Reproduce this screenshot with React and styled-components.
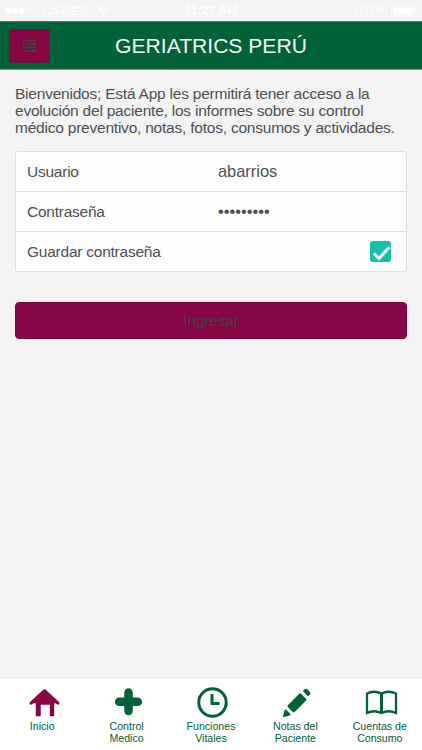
import React from "react";
import styled, { createGlobalStyle } from "styled-components";

const GlobalStyle = createGlobalStyle`
  * {
    box-sizing: border-box;
  }
  body {
    margin: 0;
    background-color: #f3f3f3;
    font-family: "Liberation Sans", Arial, sans-serif;
    color: #4d5054;
  }
`;

const StyledScreen = styled.div`
  display: flex;
  flex-direction: column;
  width: 100%;
  height: 100vh;
  overflow: hidden;
`;

const StyledStatusBar = styled.div`
  display: grid;
  grid-template-columns: 1fr auto 1fr;
  align-items: center;
  height: 21px;
  padding: 0 5px;
  color: #fdfdfd;
  font-size: 12px;
`;

const StyledStatusGroup = styled.div`
  display: flex;
  align-items: center;
  justify-content: ${(props) => props.$align || "flex-start"};
  column-gap: 4px;
`;

const StyledCarrier = styled.span`
  margin-right: 6px;
  font-size: 11px;
  letter-spacing: -0.8px;
`;

const StyledTime = styled.span`
  font-weight: 700;
  font-size: 12.3px;
`;

const StyledHeader = styled.header`
  display: grid;
  grid-template-columns: 41px 1fr 41px;
  align-items: center;
  height: 49px;
  padding: 0 9px;
  background-color: #006236;
  border-top: 1px solid #3f8567;
  border-bottom: 1px solid #6d9d86;
`;

const StyledMenuButton = styled.button`
  display: flex;
  align-items: center;
  justify-content: center;
  width: 41px;
  height: 34px;
  padding: 0;
  border: 1px solid #5d1c3c;
  border-radius: 3px;
  background-color: #870645;
`;

const StyledTitle = styled.h1`
  margin: 0;
  font-size: 21.1px;
  font-weight: 400;
  line-height: 24px;
  text-align: center;
  white-space: nowrap;
  color: #f8fffb;
`;

const StyledContent = styled.main`
  flex: 1;
  padding: 15px 15px 0;
`;

const StyledWelcome = styled.p`
  margin: 0 0 15px;
  font-size: 15.5px;
  letter-spacing: -0.22px;
  line-height: 17px;
  white-space: nowrap;
`;

const StyledForm = styled.div`
  height: 121px;
  border: 1px solid #dfdfe0;
  border-radius: 3px;
  background-color: #fdfdfd;
`;

const StyledRow = styled.div`
  display: grid;
  grid-template-columns: 191px 1fr auto;
  align-items: center;
  height: 40px;
  padding: 0 15px 0 11px;
  border-bottom: 1px solid #dfdfe0;
  &:last-child {
    height: 39px;
    border-bottom: 0;
  }
`;

const StyledLabel = styled.span`
  font-size: 15.5px;
  letter-spacing: -0.24px;
`;

const StyledValue = styled.span`
  font-size: 16.4px;
`;

const StyledCheckbox = styled.span`
  display: flex;
  grid-column: 3;
  width: 21px;
  height: 21px;
  border-radius: 3px;
  background-color: #16bfad;
`;

const StyledSubmit = styled.button`
  display: block;
  width: 100%;
  height: 37px;
  margin-top: 30px;
  padding: 0;
  border: 1px solid #7b073f;
  border-radius: 4px;
  background-color: #870645;
  font-family: inherit;
  font-size: 15.5px;
  letter-spacing: -0.2px;
  color: #3a4543;
`;

const StyledTabBar = styled.nav`
  display: grid;
  grid-template-columns: repeat(5, 1fr);
  height: 71px;
  padding-top: 7px;
  background-color: #fff;
`;

const StyledTab = styled.div`
  display: flex;
  flex-direction: column;
  align-items: center;
  color: #006236;
`;

const StyledTabIcon = styled.svg`
  width: 34px;
  height: 34px;
  margin-left: 3px;
  color: ${(props) => (props.$active ? "#870645" : "#006236")};
`;

const StyledTabLabel = styled.span`
  font-size: 10.6px;
  line-height: 12px;
  text-align: center;
  white-space: pre-line;
`;

const icons = {
  home: (
    <g
      fill="currentColor"
      stroke="currentColor"
      strokeLinecap="round"
      strokeLinejoin="round"
    >
      <path d="M4 17.200 17.500 4.700 31 17.200" strokeWidth="3" />
      <path
        d="M9.500 14h17v15.500H23.500V18H13v11.500H9.500z"
        strokeWidth="1.500"
      />
    </g>
  ),
  plus: (
    <path
      d="M17.500 6.500v18.500M8.200 15.750h18.600"
      fill="none"
      stroke="currentColor"
      strokeWidth="8.500"
      strokeLinecap="round"
    />
  ),
  clock: (
    <g fill="none" stroke="currentColor" strokeWidth="3">
      <circle cx="17.500" cy="16.500" r="13.700" />
      <path d="M17 8v9.500h7.500" />
    </g>
  ),
  pencil: (
    <g fill="currentColor" stroke="currentColor" strokeLinejoin="round">
      <path d="m8.700 20.200 11.500-11.500 5 5-11.500 11.500z" strokeWidth="2.500" />
      <path d="m24 5 1.200-1.200h1.500L29.300 6.500V8L28 9.200z" strokeWidth="1.800" />
      <path d="m5.500 24.500 4 4-5.500 1.500z" strokeWidth="2" />
    </g>
  ),
  book: (
    <g fill="none" stroke="currentColor" strokeWidth="2.300">
      <path d="M17.500 7.500Q10 4 3 7.500v19.500q7-3.500 14.500 0 7-3.500 14.500 0V7.500q-7-3.500-14.500 0" />
      <path d="M17.500 7v20.500" strokeWidth="3" />
    </g>
  ),
};

const tabs = [
  { icon: "home", label: "Inicio", active: true },
  { icon: "plus", label: "Control\nMedico" },
  { icon: "clock", label: "Funciones\nVitales" },
  { icon: "pencil", label: "Notas del\nPaciente" },
  { icon: "book", label: "Cuentas de\nConsumo" },
];

function StatusBar() {
  return (
    <StyledStatusBar>
      <StyledStatusGroup>
        <svg width="34" height="7" viewBox="0 0 34 7">
          <g fill="#fdfdfd">
            <circle cx="3" cy="3.500" r="3" />
            <circle cx="10" cy="3.500" r="3" />
            <circle cx="17" cy="3.500" r="3" />
          </g>
          <g fill="none" stroke="#fafafa">
            <circle cx="24" cy="3.500" r="2.500" />
            <circle cx="31" cy="3.500" r="2.500" />
          </g>
        </svg>
        <StyledCarrier>CARRIER</StyledCarrier>
        <svg width="12" height="10" viewBox="0 0 12 10">
          <path
            d="M.5 3.500q5.500-4 11 0M2.500 6q3.500-3 7 0"
            fill="none"
            stroke="#fdfdfd"
            strokeWidth="1.600"
          />
          <path d="m6 9.500-2-2q2-1.500 4 0z" fill="#fdfdfd" />
        </svg>
      </StyledStatusGroup>
      <StyledTime>11:27 AM</StyledTime>
      <StyledStatusGroup $align="flex-end">
        <span>100 %</span>
        <svg width="26" height="10" viewBox="0 0 26 10">
          <rect x=".5" y=".5" width="22" height="9" fill="none" stroke="#fdfdfd" />
          <path d="M2 2h19v6H2zM24 3h1.500v4H24z" fill="#fff" />
        </svg>
      </StyledStatusGroup>
    </StyledStatusBar>
  );
}

function App() {
  return (
    <StyledScreen>
      <GlobalStyle />
      <StatusBar />
      <StyledHeader>
        <StyledMenuButton aria-label="Menu">
          <svg width="13" height="12" viewBox="0 0 13 12">
            <path
              d="M0 1h2.500M3.500 1H13M0 4.300h2.500M3.500 4.300H13M0 7.600h2.500M3.500 7.600H13M0 11h2.500M3.500 11H13"
              stroke="#37493a"
              strokeWidth="2"
            />
          </svg>
        </StyledMenuButton>
        <StyledTitle>GERIATRICS PERÚ</StyledTitle>
      </StyledHeader>
      <StyledContent>
        <StyledWelcome>
          Bienvenidos; Está App les permitirá tener acceso a la
          <br />
          evolución del paciente, los informes sobre su control
          <br />
          médico preventivo, notas, fotos, consumos y actividades.
        </StyledWelcome>
        <StyledForm>
          <StyledRow>
            <StyledLabel>Usuario</StyledLabel>
            <StyledValue>abarrios</StyledValue>
          </StyledRow>
          <StyledRow>
            <StyledLabel>Contraseña</StyledLabel>
            <StyledValue>•••••••••</StyledValue>
          </StyledRow>
          <StyledRow>
            <StyledLabel>Guardar contraseña</StyledLabel>
            <StyledCheckbox>
              <svg width="21" height="21" viewBox="0 0 21 21">
                <path
                  d="m4 12.500 5 5L19.500 6"
                  fill="none"
                  stroke="#effffd"
                  strokeWidth="3"
                />
              </svg>
            </StyledCheckbox>
          </StyledRow>
        </StyledForm>
        <StyledSubmit>Ingresar</StyledSubmit>
      </StyledContent>
      <StyledTabBar>
        {tabs.map((tab) => (
          <StyledTab key={tab.icon}>
            <StyledTabIcon viewBox="0 0 34 34" $active={tab.active}>
              {icons[tab.icon]}
            </StyledTabIcon>
            <StyledTabLabel>{tab.label}</StyledTabLabel>
          </StyledTab>
        ))}
      </StyledTabBar>
    </StyledScreen>
  );
}

export default App;
